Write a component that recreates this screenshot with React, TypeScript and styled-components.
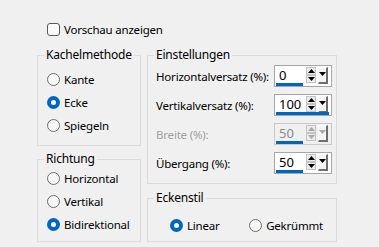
import React from "react";
import styled, {createGlobalStyle} from "styled-components";

const GlobalStyle = createGlobalStyle`
  html, body {
    margin: 0;
    background: #f0f0f0;
  }
  body {
    font-family: "Noto Sans", "Open Sans", sans-serif;
    font-size: 11.5px;
    letter-spacing: -0.2px;
    color: #000;
  }
`;

const Page = styled.div`
  width: 379px;
  height: 247px;
  padding: 23px 0 0 37px;
  box-sizing: border-box;
  display: flex;
  flex-direction: column;
`;

const CheckRow = styled.label`
  display: flex;
  align-items: center;
  gap: 4px;
  height: 13px;
  margin-left: 10px;
  margin-bottom: 11px;
`;

const CheckBox = styled.span`
  width: 13px;
  height: 13px;
  box-sizing: border-box;
  border: 1px solid #5a5a5a;
  border-radius: 3px;
  background: #fbfbfb;
`;

const Columns = styled.div`
  display: flex;
  gap: 6px;
`;

const Column = styled.div<{ $width: number; $gap: number }>`
  display: flex;
  flex-direction: column;
  width: ${p => p.$width}px;
  gap: ${p => p.$gap}px;
`;

const Group = styled.fieldset<{ $height: number }>`
  margin: 0;
  min-width: 0;
  height: ${p => p.$height}px;
  box-sizing: border-box;
  border: 1px solid #dcdcdc;
  padding: 0;
`;

const Legend = styled.legend`
  margin-left: 6px;
  padding: 0 2px;
  line-height: 16px;
  font-size: 12px;
`;

const RadioList = styled.div<{ $top: number }>`
  display: flex;
  flex-direction: column;
  gap: 9px;
  padding: ${p => p.$top}px 0 0 9px;
`;

const RadioRow = styled.label`
  display: flex;
  align-items: center;
  gap: 4px;
  height: 14px;
  white-space: nowrap;
`;

const RadioDot = styled.span<{ $on?: boolean }>`
  flex: none;
  width: 13px;
  height: 13px;
  box-sizing: border-box;
  border-radius: 50%;
  background: ${p => (p.$on ? "#fff" : "#f7f7f7")};
  border: ${p => (p.$on ? "4px solid #0067c0" : "1px solid #6e6e6e")};
`;

const RadioInline = styled.div`
  display: flex;
  align-items: center;
  padding: 12px 0 0 22px;
`;

const InlineItem = styled.div<{ $width: number }>`
  width: ${p => p.$width}px;
`;

const SettingsList = styled.div`
  display: flex;
  flex-direction: column;
  gap: 7px;
  padding: 2px 0 0 8px;
`;

const SettingRow = styled.div`
  display: flex;
  align-items: center;
  justify-content: space-between;
  height: 22px;
  padding-right: 4px;
`;

const SettingLabel = styled.span<{ $disabled?: boolean }>`
  white-space: nowrap;
  color: ${p => (p.$disabled ? "#a0a0a0" : "#000")};
`;

const Spin = styled.div<{ $disabled?: boolean; $focus?: boolean }>`
  position: relative;
  flex: none;
  width: 58px;
  height: 22px;
  box-sizing: border-box;
  border: 1px solid ${p => (p.$disabled ? "#c8c8c8" : "#a6a6a6")};
  background: ${p => (p.$disabled ? "#f0f0f0" : "#fff")};
  display: flex;
  align-items: flex-start;
  padding: 0 3px 0 4px;
  gap: 2px;

  &::after {
    content: "";
    position: absolute;
    left: 1px;
    bottom: 0;
    height: 3px;
    width: ${p => (p.$focus ? "53px" : "27px")};
    background: #0067c0;
  }
`;

const SpinValue = styled.span<{ $disabled?: boolean }>`
  flex: 1;
  font-size: 13px;
  letter-spacing: 0;
  line-height: 19px;
  color: ${p => (p.$disabled ? "#8a8a8a" : "#000")};
`;

const Arrows = styled.div`
  display: flex;
  flex-direction: column;
  margin-top: 1px;
`;

const ArrowBtn = styled.div<{ $disabled?: boolean }>`
  width: 10px;
  height: 8px;
  box-sizing: border-box;
  border: 1px solid #c4c4c4;
  background: #ececec;
  display: flex;
  align-items: center;
  justify-content: center;
  color: ${p => (p.$disabled ? "#a8a8a8" : "#000")};
`;

const DropBtn = styled.div<{ $disabled?: boolean }>`
  width: 10px;
  height: 17px;
  margin-top: 1px;
  box-sizing: border-box;
  background: #f4f4f4;
  border-right: 2px solid #6d6d6d;
  border-bottom: 2px solid #6d6d6d;
  border-top: 1px solid #fff;
  border-left: 1px solid #fff;
  display: flex;
  align-items: flex-start;
  justify-content: center;
  padding-top: 4px;
  color: ${p => (p.$disabled ? "#a8a8a8" : "#000")};
`;

function Tri({down}: { down?: boolean }) {
  return (
    <svg width="7" height="4" viewBox="0 0 7 4">
      <path d={down ? "M0 0H7L3.5 4Z" : "M0 4H7L3.5 0Z"} fill="currentColor"/>
    </svg>
  );
}

function SpinBox({value, disabled, focus}: { value: string; disabled?: boolean; focus?: boolean }) {
  return (
    <Spin $disabled={disabled} $focus={focus}>
      <SpinValue $disabled={disabled}>{value}</SpinValue>
      <Arrows>
        <ArrowBtn $disabled={disabled}><Tri/></ArrowBtn>
        <ArrowBtn $disabled={disabled}><Tri down/></ArrowBtn>
      </Arrows>
      <DropBtn $disabled={disabled}><Tri down/></DropBtn>
    </Spin>
  );
}

function Radio({label, on}: { label: string; on?: boolean }) {
  return (
    <RadioRow>
      <RadioDot $on={on}/>
      {label}
    </RadioRow>
  );
}

const settings = [
  {label: "Horizontalversatz (%):", value: "0"},
  {label: "Vertikalversatz (%):", value: "100", focus: true},
  {label: "Breite (%):", value: "50", disabled: true},
  {label: "Übergang (%):", value: "50"},
];

function App() {
  return (
    <>
      <GlobalStyle/>
      <Page>
        <CheckRow>
          <CheckBox/>
          Vorschau anzeigen
        </CheckRow>
        <Columns>
          <Column $width={104} $gap={5}>
            <Group $height={99}>
              <Legend>Kachelmethode</Legend>
              <RadioList $top={9}>
                <Radio label="Kante"/>
                <Radio label="Ecke" on/>
                <Radio label="Spiegeln"/>
              </RadioList>
            </Group>
            <Group $height={91}>
              <Legend>Richtung</Legend>
              <RadioList $top={4}>
                <Radio label="Horizontal"/>
                <Radio label="Vertikal"/>
                <Radio label="Bidirektional" on/>
              </RadioList>
            </Group>
          </Column>
          <Column $width={190} $gap={6}>
            <Group $height={137}>
              <Legend>Einstellungen</Legend>
              <SettingsList>
                {settings.map(s => (
                  <SettingRow key={s.label}>
                    <SettingLabel $disabled={s.disabled}>{s.label}</SettingLabel>
                    <SpinBox value={s.value} disabled={s.disabled} focus={s.focus}/>
                  </SettingRow>
                ))}
              </SettingsList>
            </Group>
            <Group $height={52}>
              <Legend>Eckenstil</Legend>
              <RadioInline>
                <InlineItem $width={82}><Radio label="Linear" on/></InlineItem>
                <InlineItem $width={90}><Radio label="Gekrümmt"/></InlineItem>
              </RadioInline>
            </Group>
          </Column>
        </Columns>
      </Page>
    </>
  );
}

export default App;
